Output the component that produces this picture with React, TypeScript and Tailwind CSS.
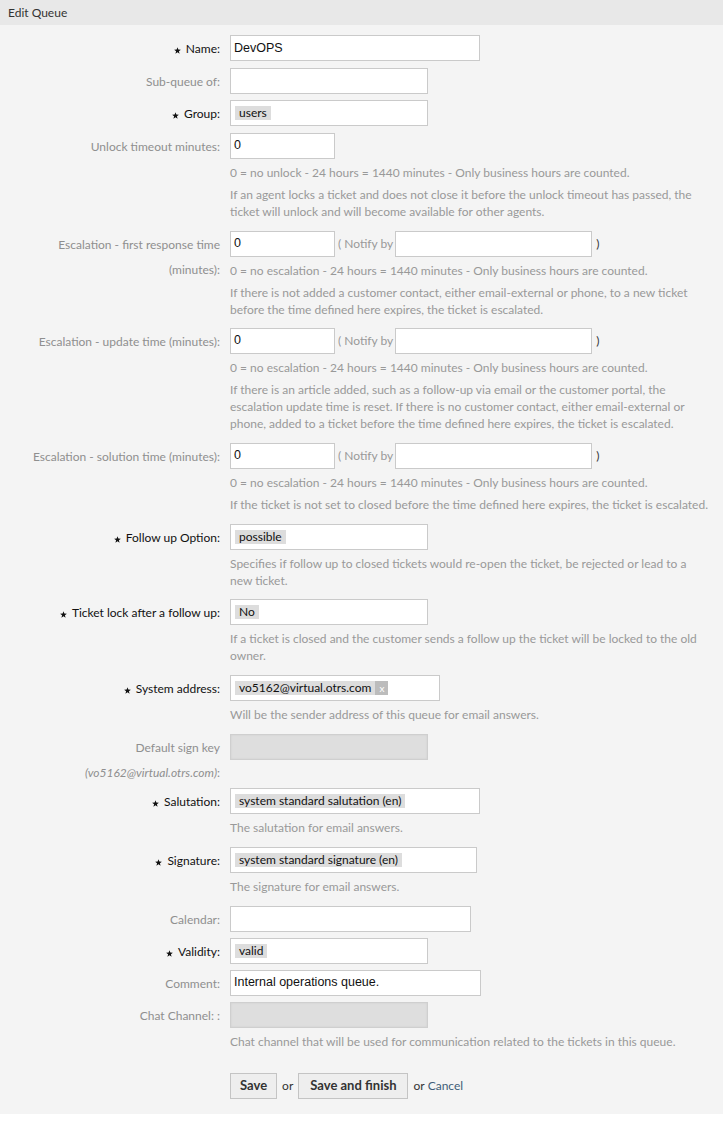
import React from "react";

const font = { fontFamily: "Lato, 'Noto Sans', sans-serif" };
const inputFont = { fontFamily: "'Liberation Sans', Arial, sans-serif" };

function Star() {
  return (
    <svg viewBox="0 0 10 10" className="mr-[5px] inline-block h-[7px] w-[7px] align-[-1px]">
      <path d="M5 0.3 6.2 3.7 9.8 3.8 7 6 8 9.6 5 7.5 2 9.6 3 6 0.2 3.8 3.8 3.7Z" fill="#111" />
    </svg>
  );
}

function Row({
  label,
  required,
  pb = "pb-[11px]",
  children,
}: {
  label: React.ReactNode;
  required?: boolean;
  pb?: string;
  children: React.ReactNode;
}) {
  return (
    <div className={`flex ${pb}`}>
      <div
        className={`w-[220px] shrink-0 pt-[1px] text-right text-[12px] leading-[25px] ${
          required ? "text-[#111]" : "text-[#8f8f8f]"
        }`}
      >
        {required && <Star />}
        {label}
      </div>
      <div className="min-w-0 flex-1 pl-[10px] pr-[13px]">{children}</div>
    </div>
  );
}

function Input({ w, value, disabled }: { w: string; value?: string; disabled?: boolean }) {
  return (
    <div
      className={`flex h-[26px] items-center border px-[3px] text-[12.5px] text-[#111] ${w} ${
        disabled
          ? "border-[#cfcfcf] bg-[#dedede] shadow-[inset_0_0_2px_rgba(0,0,0,0.08)]"
          : "border-[#cacaca] bg-white"
      }`}
      style={inputFont}
    >
      {value}
    </div>
  );
}

function Select({ w, value, removable }: { w: string; value: string; removable?: boolean }) {
  return (
    <div className={`flex h-[26px] items-center border border-[#cacaca] bg-white pl-[4px] ${w}`}>
      <span className="flex h-[14px] items-center bg-[#dddddd] px-[4px] text-[12px] leading-[14px] text-[#111]">
        {value}
      </span>
      {removable && (
        <span className="flex h-[14px] w-[13px] items-center justify-center bg-[#bcbcbc] text-[10px] leading-[14px] text-white">
          x
        </span>
      )}
    </div>
  );
}

function Hint({ children }: { children: React.ReactNode }) {
  return <p className="mt-[5px] text-[12px] leading-[17px] text-[#999]">{children}</p>;
}

function Escalation({ hint, desc }: { hint: string; desc: React.ReactNode }) {
  return (
    <>
      <div className="flex items-center text-[12px] text-[#999]">
        <Input w="w-[105px]" value="0" />
        <span className="ml-[3px] mr-[2px]">( Notify by</span>
        <Input w="w-[197px]" />
        <span className="ml-[4px] text-[#333]">)</span>
      </div>
      <Hint>{hint}</Hint>
      <Hint>{desc}</Hint>
    </>
  );
}

export default function App() {
  const noEsc = "0 = no escalation - 24 hours = 1440 minutes - Only business hours are counted.";

  return (
    <div className="min-h-[1127px] bg-white" style={font}>
      <div className="w-[723px] bg-[#f4f4f4]">
        <div className="flex h-[25px] items-center bg-[#e8e8e8] pl-[8px] text-[12px] text-[#333]">
          Edit Queue
        </div>

        <div className="pb-[15px] pt-[10px]">
          <Row label="Name:" required pb="pb-[6.5px]">
            <Input w="w-[250px]" value="DevOPS" />
          </Row>
          <Row label="Sub-queue of:" pb="pb-[6.5px]">
            <Input w="w-[198px]" />
          </Row>
          <Row label="Group:" required pb="pb-[6.5px]">
            <Select w="w-[198px]" value="users" />
          </Row>
          <Row label="Unlock timeout minutes:">
            <Input w="w-[105px]" value="0" />
            <Hint>0 = no unlock - 24 hours = 1440 minutes - Only business hours are counted.</Hint>
            <Hint>
              If an agent locks a ticket and does not close it before the unlock timeout has passed, the
              ticket will unlock and will become available for other agents.
            </Hint>
          </Row>
          <Row
            label={
              <>
                Escalation - first response time
                <br />
                (minutes):
              </>
            }
            pb="pb-[10px]"
          >
            <Escalation
              hint={noEsc}
              desc="If there is not added a customer contact, either email-external or phone, to a new ticket before the time defined here expires, the ticket is escalated."
            />
          </Row>
          <Row label="Escalation - update time (minutes):">
            <Escalation
              hint={noEsc}
              desc="If there is an article added, such as a follow-up via email or the customer portal, the escalation update time is reset. If there is no customer contact, either email-external or phone, added to a ticket before the time defined here expires, the ticket is escalated."
            />
          </Row>
          <Row label="Escalation - solution time (minutes):">
            <Escalation
              hint={noEsc}
              desc="If the ticket is not set to closed before the time defined here expires, the ticket is escalated."
            />
          </Row>
          <Row label="Follow up Option:" required pb="pb-[10px]">
            <Select w="w-[198px]" value="possible" />
            <Hint>
              Specifies if follow up to closed tickets would re-open the ticket, be rejected or lead to a
              new ticket.
            </Hint>
          </Row>
          <Row label="Ticket lock after a follow up:" required>
            <Select w="w-[198px]" value="No" />
            <Hint>
              If a ticket is closed and the customer sends a follow up the ticket will be locked to the old
              owner.
            </Hint>
          </Row>
          <Row label="System address:" required>
            <Select w="w-[210px]" value="vo5162@virtual.otrs.com" removable />
            <Hint>Will be the sender address of this queue for email answers.</Hint>
          </Row>
          <Row
            label={
              <>
                Default sign key
                <br />
                <span className="italic">(vo5162@virtual.otrs.com)</span>:
              </>
            }
            pb="pb-[3px]"
          >
            <Input w="w-[198px]" disabled />
          </Row>
          <Row label="Salutation:" required>
            <Select w="w-[250px]" value="system standard salutation (en)" />
            <Hint>The salutation for email answers.</Hint>
          </Row>
          <Row label="Signature:" required>
            <Select w="w-[247px]" value="system standard signature (en)" />
            <Hint>The signature for email answers.</Hint>
          </Row>
          <Row label="Calendar:" pb="pb-[6px]">
            <Input w="w-[241px]" />
          </Row>
          <Row label="Validity:" required pb="pb-[6px]">
            <Select w="w-[198px]" value="valid" />
          </Row>
          <Row label="Comment:" pb="pb-[6px]">
            <Input w="w-[251px]" value="Internal operations queue." />
          </Row>
          <Row label="Chat Channel: :" pb="pb-[23px]">
            <Input w="w-[198px]" disabled />
            <Hint>Chat channel that will be used for communication related to the tickets in this queue.</Hint>
          </Row>

          <div className="flex">
            <div className="w-[220px] shrink-0" />
            <div className="flex items-center pl-[10px] text-[12px] text-[#333]">
              <button className="h-[26px] border border-[#c4c4c4] bg-[#eeeeee] px-[9px] text-[13px] font-bold text-[#333]">
                Save
              </button>
              <span className="mx-[5px]">or</span>
              <button className="h-[26px] border border-[#c4c4c4] bg-[#eeeeee] px-[11px] text-[13px] font-bold text-[#333]">
                Save and finish
              </button>
              <span className="ml-[5px]">or</span>
              <a className="ml-[3px] text-[#3f5d78]">Cancel</a>
            </div>
          </div>
        </div>
      </div>
    </div>
  );
}
